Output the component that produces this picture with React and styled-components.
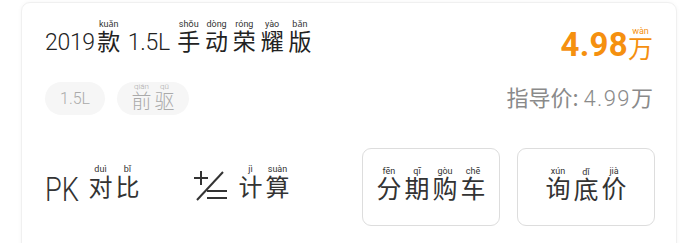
import React from 'react'
import styled, { createGlobalStyle } from 'styled-components'

const Global = createGlobalStyle`
    body {
        margin: 0;
        background: #fff;
        font-family: "Noto Sans CJK SC", "Noto Sans", sans-serif;
        color: #333;
    }
    ruby {
        margin: 0 1.5px;
    }
    rt {
        font-family: "Roboto", "Noto Sans", sans-serif;
        font-size: 9px;
        color: #333;
        line-height: 1;
    }
`

const Page = styled.div`
    width: 688px;
    height: 243px;
    overflow: hidden;
    padding: 2px 11px 0 21px;
    box-sizing: border-box;
`

const Card = styled.div`
    height: 260px;
    border: 1px solid #f0f0f0;
    border-radius: 9px;
    box-shadow: 0 0 4px rgba(0, 0, 0, 0.04);
    padding: 16px 23px 0 23px;
    box-sizing: border-box;
`

const Top = styled.div`
    display: flex;
    justify-content: space-between;
    align-items: flex-start;
`

const Left = styled.div`
    display: flex;
    flex-flow: column nowrap;
`

const Title = styled.div`
    font-size: 23px;
    line-height: 32px;
    color: #222;
    & span.num {
        font-family: "Roboto", "Noto Sans", sans-serif;
        font-weight: 300;
        font-size: 23px;
        letter-spacing: -0.3px;
    }
    & ruby {
        margin: 0 2.4px;
    }
`

const Chips = styled.div`
    display: flex;
    gap: 12px;
    margin-top: 23px;
`

const Chip = styled.div`
    height: 33px;
    padding: 0 ${props => props.cn ? '13px' : '15px'};
    border-radius: 17px;
    background: #f6f6f6;
    color: #aaa;
    display: flex;
    align-items: center;
    font-size: ${props => props.cn ? '20px' : '16px'};
    font-family: ${props => props.cn ? '"Noto Sans CJK SC", sans-serif' : '"Roboto", sans-serif'};
    font-weight: 300;
    & rt {
        color: #aaa;
        font-size: 8px;
    }
`

const Right = styled.div`
    display: flex;
    flex-flow: column nowrap;
    align-items: flex-end;
`

const Price = styled.div`
    color: #f5900f;
    display: flex;
    align-items: flex-end;
    margin-top: 8px;
    & b {
        font-family: "Roboto", "DejaVu Sans", sans-serif;
        font-weight: 700;
        font-size: 33px;
        line-height: 31px;
        letter-spacing: 0.3px;
    }
    & ruby {
        font-size: 25px;
        line-height: 25px;
        margin: 0;
    }
    & rt {
        color: #f5900f;
    }
`

const Guide = styled.div`
    margin-top: 22px;
    color: #8a8a8a;
    font-size: 22px;
    line-height: 28px;
    & span {
        font-family: "Roboto", sans-serif;
        font-weight: 300;
        letter-spacing: 1.4px;
    }
`

const Bottom = styled.div`
    display: flex;
    align-items: center;
    margin-top: 33px;
`

const Action = styled.div`
    display: flex;
    align-items: flex-end;
    gap: 8px;
    font-size: 24px;
    color: #333;
    width: ${props => props.w}px;
    margin-top: -7px;
`

const PK = styled.span`
    display: inline-block;
    width: 34px;
    font-family: "Roboto", sans-serif;
    font-weight: 300;
    font-size: 34px;
    line-height: 30px;
    transform: scaleX(0.8);
    transform-origin: left center;
    margin-bottom: -1px;
`

const Buttons = styled.div`
    display: flex;
    gap: 17px;
    margin-left: auto;
    margin-right: -2px;
`

const Button = styled.div`
    width: 138px;
    height: 78px;
    box-sizing: border-box;
    border: 1px solid #ddd;
    border-radius: 9px;
    display: flex;
    align-items: center;
    justify-content: center;
    font-size: 25px;
    color: #333;
    padding-bottom: 2px;
`

function Py({ c, p }) {
    return <ruby>{c}<rt>{p}</rt></ruby>
}

function CalcIcon() {
    return (
        <svg width="36" height="32" viewBox="0 0 36 32" fill="none" stroke="#333" strokeWidth="2">
            <path d="M1 7 H15 M8 0 V14" />
            <path d="M30 1 L4 29" />
            <path d="M14 20 H34 M14 27 H34" />
        </svg>
    )
}

export default function App() {
    return (
        <Page>
            <Global />
            <Card>
                <Top>
                    <Left>
                        <Title>
                            <span className="num">2019</span><Py c="款" p="kuǎn" /> <span className="num">1.5L</span>{' '}
                            <Py c="手" p="shǒu" /><Py c="动" p="dòng" /><Py c="荣" p="róng" /><Py c="耀" p="yào" /><Py c="版" p="bǎn" />
                        </Title>
                        <Chips>
                            <Chip>1.5L</Chip>
                            <Chip cn><Py c="前" p="qián" /><Py c="驱" p="qū" /></Chip>
                        </Chips>
                    </Left>
                    <Right>
                        <Price>
                            <b>4.98</b><Py c="万" p="wàn" />
                        </Price>
                        <Guide>指导价: <span>4.99</span>万</Guide>
                    </Right>
                </Top>
                <Bottom>
                    <Action w={148}>
                        <PK>PK</PK>
                        <span><Py c="对" p="duì" /><Py c="比" p="bǐ" /></span>
                    </Action>
                    <Action w={150}>
                        <CalcIcon />
                        <span><Py c="计" p="jì" /><Py c="算" p="suàn" /></span>
                    </Action>
                    <Buttons>
                        <Button><Py c="分" p="fēn" /><Py c="期" p="qī" /><Py c="购" p="gòu" /><Py c="车" p="chē" /></Button>
                        <Button><Py c="询" p="xún" /><Py c="底" p="dǐ" /><Py c="价" p="jià" /></Button>
                    </Buttons>
                </Bottom>
            </Card>
        </Page>
    )
}
